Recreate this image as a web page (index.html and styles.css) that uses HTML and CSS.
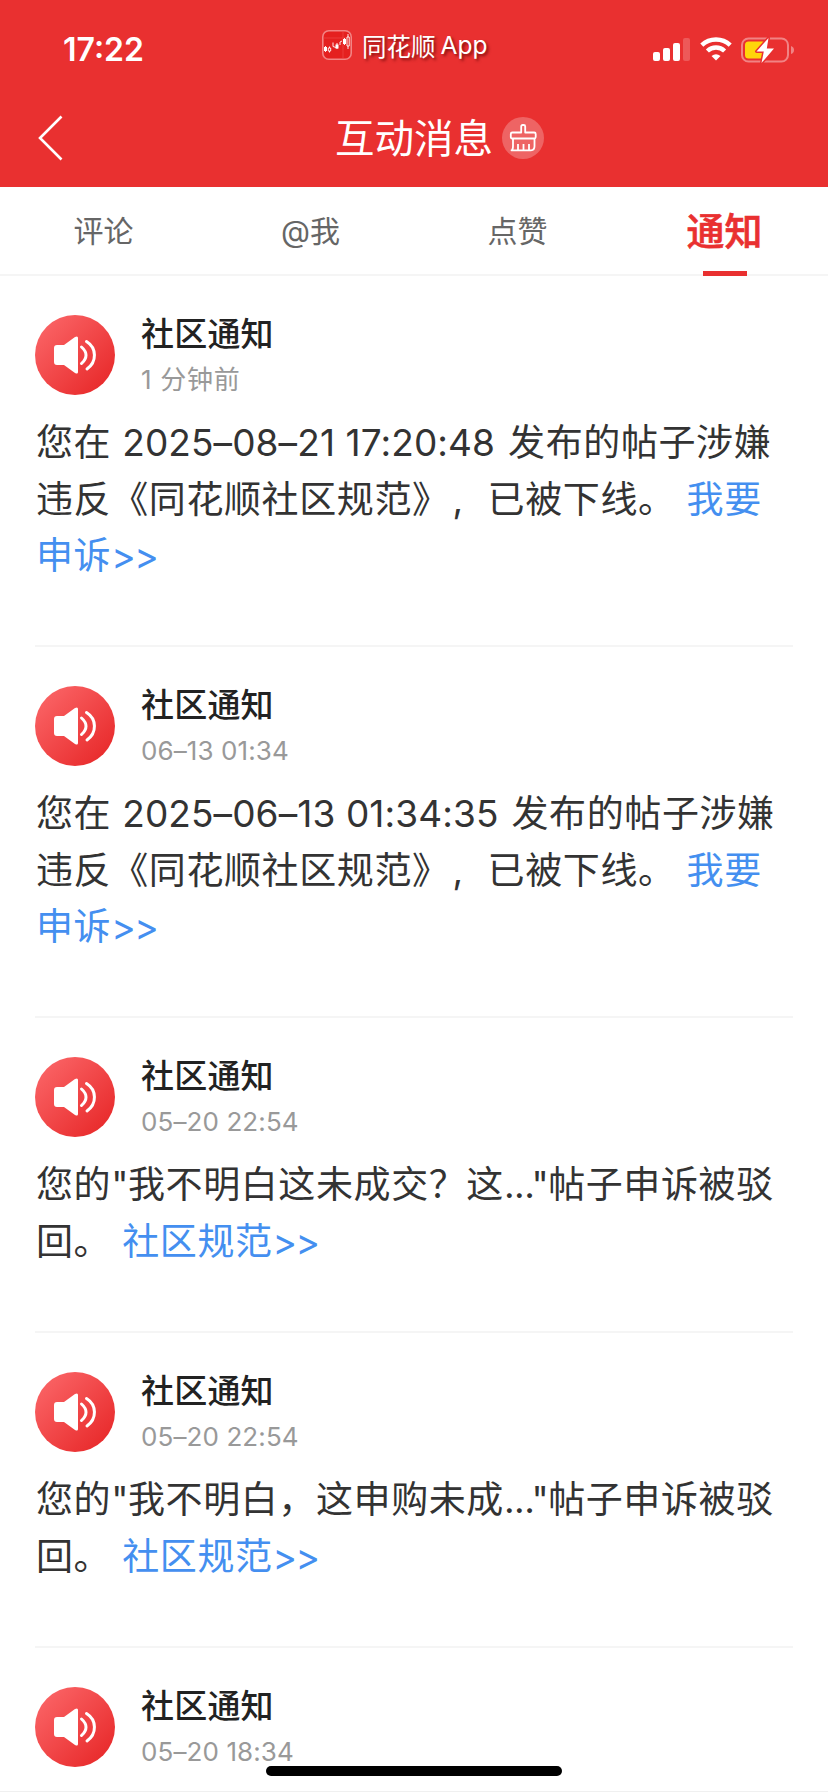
FILE: index.html
```html
<!DOCTYPE html>
<html lang="zh-CN">
<head>
    <meta charset="UTF-8">
    <meta name="viewport" content="width=device-width, initial-scale=1.0">
    <title>互动消息</title>
    <link rel="stylesheet" href="styles.css">
</head>
<body>
    <svg class="sprite" aria-hidden="true">
        <defs>
            <linearGradient id="avatarBg" x1="0" y1="0" x2="1" y2="1">
                <stop offset="0.1" stop-color="#fa6365"/>
                <stop offset="0.9" stop-color="#e82a2b"/>
            </linearGradient>
        </defs>
        <symbol id="speaker" viewBox="0 0 80 80">
            <circle cx="40" cy="40" r="40" fill="url(#avatarBg)"/>
            <path d="M22 30h7l11-8q3-1.500 3 1v34q0 2.500-3 1l-11-8h-7q-3 0-3-3V33q0-3 3-3z" fill="#fff"/>
            <path d="M46.500 32q9 8 0 16.500M51.500 26.500C62 33 62 47 52 54" fill="none" stroke="#fff" stroke-width="3" stroke-linecap="round"/>
        </symbol>
    </svg>

    <header class="header">
        <div class="status-bar">
            <span class="clock">17:22</span>
            <div class="app-label">
                <svg class="app-icon" width="30" height="30" viewBox="0 0 30 30">
                    <rect x="0.800" y="0.800" width="28.400" height="28.400" rx="6" fill="#e5201f" stroke="#f28484" stroke-width="1.600"/>
                    <path d="M1 8h28M21 1v28" stroke="#ef4e4d" stroke-width="0.600"/>
                    <path d="M2 17h3v4H2zM13.500 14.500h3v4h-3zM21 9h3v5h-3z" fill="#fff"/>
                    <path d="M3.500 16v6M7.500 16.500v6M11 12.500v4l3 1M15 13v6M18 15v-3l2-1M22.500 8v7M26 4v15" stroke="#fff" stroke-width="0.900" fill="none"/>
                    <path d="M6.300 18h2.400v3H6.300zM25 7h2.200v9H25z" fill="#e5201f" stroke="#fff" stroke-width="0.900"/>
                </svg>
                <span>同花顺</span><span class="app-word">App</span>
            </div>
            <div class="status-icons">
                <svg width="37" height="23" viewBox="0 0 37 23" fill="#fff">
                    <rect x="0" y="14" width="7" height="9" rx="2"/>
                    <rect x="10" y="10" width="7" height="13" rx="2"/>
                    <rect x="20" y="5" width="7" height="18" rx="2"/>
                    <rect x="30" y="0" width="7" height="23" rx="2" opacity="0.200"/>
                </svg>
                <svg class="wifi" width="32" height="24" viewBox="0 0 32 24">
                    <path d="M1.800 8.200a20.500 20.500 0 0 1 28.400 0M7.400 14a12.500 12.500 0 0 1 17.200 0" fill="none" stroke="#fff" stroke-width="4.400"/>
                    <path d="M16 23.500l-4.500-4.600q4.500-3.200 9 0z" fill="#fff"/>
                </svg>
                <svg class="battery" width="54" height="28" viewBox="0 0 54 28">
                    <rect x="1" y="2.500" width="46" height="23" rx="6.500" fill="none" stroke="#f18384" stroke-width="2"/>
                    <path d="M50 10q3 1 3 4t-3 4z" fill="#f18384"/>
                    <rect x="4" y="5.500" width="21" height="17" rx="3.500" fill="#ffd60a"/>
                    <path d="M27.500 2L15.500 15.500h7.300L20.500 27 33 12.500h-7.200z" fill="#fff" stroke="#e93030" stroke-width="3" paint-order="stroke" stroke-linejoin="round"/>
                </svg>
            </div>
        </div>
        <div class="title-bar">
            <svg class="back" width="26" height="46" viewBox="0 0 26 46">
                <path d="M23.500 1.500L2 23l21.500 21.500" fill="none" stroke="#fff" stroke-width="2.600"/>
            </svg>
            <h1 class="title">互动消息</h1>
            <svg class="clean" width="42" height="42" viewBox="0 0 42 42">
                <circle cx="21" cy="21" r="21" fill="#fff" fill-opacity="0.250"/>
                <g fill="none" stroke="#fff" stroke-width="1.800" stroke-linejoin="round">
                    <path d="M19.200 15.500V9.500q0-1.500 1.500-1.500h1q1.500 0 1.500 1.500v6h9q1.500 0 1.500 1.500v3q0 1.500-1.500 1.500H10.300q-1.500 0-1.500-1.500v-3q0-1.500 1.500-1.500z"/>
                    <path d="M11 21.500v7.500q0 4-1.500 4.300H29q3.500 0 3.500-4v-7.800M16 33v-6M21.500 33v-6M27 33v-6"/>
                </g>
            </svg>
        </div>
    </header>

    <nav class="tabs">
        <a class="tab">评论</a>
        <a class="tab">@我</a>
        <a class="tab">点赞</a>
        <a class="tab active">通知</a>
    </nav>

    <main class="list">
        <article class="notice">
            <div class="notice-head">
                <svg class="avatar"><use href="#speaker"/></svg>
                <div>
                    <h2 class="name">社区通知</h2>
                    <p class="time ago">1 分钟前</p>
                </div>
            </div>
            <p class="text">您在 <span class="date">2025–08–21 17:20:48</span> 发布的帖子涉嫌<br>违反《同花顺社区规范》<span class="comma">,</span>已被下线。<a class="link">我要<br>申诉<span class="arrows">&gt;&gt;</span></a></p>
        </article>

        <article class="notice">
            <div class="notice-head">
                <svg class="avatar"><use href="#speaker"/></svg>
                <div>
                    <h2 class="name">社区通知</h2>
                    <p class="time">06–13 01:34</p>
                </div>
            </div>
            <p class="text">您在 <span class="date">2025–06–13 01:34:35</span> 发布的帖子涉嫌<br>违反《同花顺社区规范》<span class="comma">,</span>已被下线。<a class="link">我要<br>申诉<span class="arrows">&gt;&gt;</span></a></p>
        </article>

        <article class="notice">
            <div class="notice-head">
                <svg class="avatar"><use href="#speaker"/></svg>
                <div>
                    <h2 class="name">社区通知</h2>
                    <p class="time">05–20 22:54</p>
                </div>
            </div>
            <p class="text">您的<span class="quote">"</span>我不明白这未成交？这<span class="quote">..."</span>帖子申诉被驳<br>回。<a class="link">社区规范<span class="arrows">&gt;&gt;</span></a></p>
        </article>

        <article class="notice">
            <div class="notice-head">
                <svg class="avatar"><use href="#speaker"/></svg>
                <div>
                    <h2 class="name">社区通知</h2>
                    <p class="time">05–20 22:54</p>
                </div>
            </div>
            <p class="text">您的<span class="quote">"</span>我不明白，这申购未成<span class="quote">..."</span>帖子申诉被驳<br>回。<a class="link">社区规范<span class="arrows">&gt;&gt;</span></a></p>
        </article>

        <article class="notice">
            <div class="notice-head">
                <svg class="avatar"><use href="#speaker"/></svg>
                <div>
                    <h2 class="name">社区通知</h2>
                    <p class="time">05–20 18:34</p>
                </div>
            </div>
        </article>
    </main>

    <div class="home-indicator"></div>
</body>
</html>
```
FILE: styles.css
```css
* {
    box-sizing: border-box;
    margin: 0;
    padding: 0;
}

body {
    height: 1792px;
    overflow: hidden;
    border-bottom: 1px solid #f0f0f0;
    background-color: #fff;
    color: #333;
    font-family: Inter, "Noto Sans CJK SC", sans-serif;
}

.sprite {
    position: absolute;
    width: 0;
    height: 0;
}

.header {
    height: 187px;
    background-color: #e93030;
    color: #fff;
}

/* status bar */
.status-bar {
    display: grid;
    grid-template-columns: 322px 331px 1fr;
    height: 88px;
}

.clock {
    padding: 32px 0 0 63px;
    font-size: 32px;
    line-height: 36px;
    font-weight: 600;
}

.app-label {
    display: flex;
    align-items: center;
    height: 32px;
    margin-top: 29px;
    font-size: 24.5px;
    text-shadow: 2px 2px 3px rgba(90, 0, 0, 0.7);
}

.app-icon {
    margin-right: 10px;
}

.app-word {
    margin-left: 5px;
}

.status-icons {
    display: flex;
    align-items: flex-start;
    padding-top: 38px;
}

.wifi {
    margin: -1px 0 0 10px;
}

.battery {
    margin: -2px 0 0 9px;
}

/* title bar */
.title-bar {
    display: flex;
    align-items: center;
    height: 99px;
    padding: 0 0 0 38px;
}

.title {
    margin-left: 271px;
    padding-top: 2px;
    font-size: 39.5px;
    line-height: 56px;
    font-weight: 400;
}

.clean {
    margin-left: 9px;
}

/* tabs */
.tabs {
    display: grid;
    grid-template-columns: repeat(4, 1fr);
    height: 89px;
    border-bottom: 2px solid #f5f5f5;
}

.tab {
    display: flex;
    flex-direction: column;
    align-items: center;
    height: 89px;
    font-size: 30px;
    line-height: 88px;
    color: #666;
}

.tab.active {
    font-size: 38px;
    font-weight: 500;
    -webkit-text-stroke: 0.6px #e93030;
    color: #e93030;
}

.tab.active::after {
    content: "";
    width: 44px;
    height: 5px;
    margin-top: -4px;
    background-color: #e93030;
}

/* notices */
.list {
    padding: 0 35px;
}

.notice {
    height: 371px;
    padding-top: 39px;
    border-bottom: 2px solid #f5f5f5;
}

.notice:nth-child(n+3) {
    height: 315px;
}

.notice:last-child {
    height: auto;
    border-bottom: none;
}

.notice-head {
    display: flex;
    height: 85px;
}

.avatar {
    width: 80px;
    height: 80px;
    margin-right: 26px;
}

.name {
    font-size: 33px;
    line-height: 39px;
    font-weight: 500;
    letter-spacing: 0.2px;
    color: #222;
}

.time {
    margin-top: 7px;
    font-size: 26px;
    line-height: 38px;
    letter-spacing: 0.1px;
    color: #999;
}

.ago {
    letter-spacing: 0.7px;
}

.text {
    margin-top: 15px;
    padding-left: 1px;
    font-size: 37px;
    line-height: 56.5px;
    letter-spacing: 0.6px;
    white-space: nowrap;
}

.date {
    margin-right: 2px;
    letter-spacing: 0.1px;
}

.quote {
    letter-spacing: -0.5px;
}

.arrows {
    letter-spacing: -1.5px;
}

.comma {
    display: inline-block;
    width: 38px;
    padding-left: 3px;
}

.link {
    margin-left: 11px;
    color: #448ff0;
}

.home-indicator {
    position: fixed;
    left: 266px;
    bottom: 16px;
    width: 296px;
    height: 10px;
    border-radius: 5px;
    background-color: #000;
}
```
